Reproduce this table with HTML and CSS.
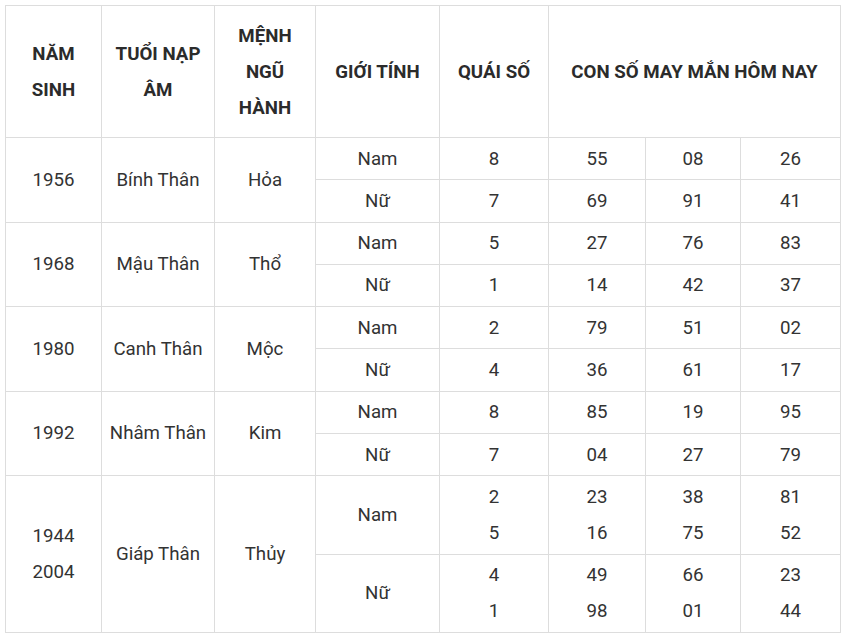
FILE: index.html
```html
<!DOCTYPE html>
<html lang="vi">
<head>
<meta charset="utf-8">
<link rel="stylesheet" href="styles.css">
</head>
<body>
<table class="tbl">
  <colgroup>
    <col class="c1"><col class="c2"><col class="c3"><col class="c4"><col class="c5"><col class="c6"><col class="c7"><col class="c8">
  </colgroup>
  <thead>
    <tr>
      <th>NĂM<br>SINH</th>
      <th>TUỔI NẠP<br>ÂM</th>
      <th>MỆNH<br>NGŨ<br>HÀNH</th>
      <th>GIỚI TÍNH</th>
      <th>QUÁI SỐ</th>
      <th colspan="3">CON SỐ MAY MẮN HÔM NAY</th>
    </tr>
  </thead>
  <tbody>
    <tr><td rowspan="2">1956</td><td rowspan="2">Bính Thân</td><td rowspan="2">Hỏa</td><td>Nam</td><td>8</td><td>55</td><td>08</td><td>26</td></tr>
    <tr><td>Nữ</td><td>7</td><td>69</td><td>91</td><td>41</td></tr>
    <tr><td rowspan="2">1968</td><td rowspan="2">Mậu Thân</td><td rowspan="2">Thổ</td><td>Nam</td><td>5</td><td>27</td><td>76</td><td>83</td></tr>
    <tr><td>Nữ</td><td>1</td><td>14</td><td>42</td><td>37</td></tr>
    <tr><td rowspan="2">1980</td><td rowspan="2">Canh Thân</td><td rowspan="2">Mộc</td><td>Nam</td><td>2</td><td>79</td><td>51</td><td>02</td></tr>
    <tr><td>Nữ</td><td>4</td><td>36</td><td>61</td><td>17</td></tr>
    <tr><td rowspan="2">1992</td><td rowspan="2">Nhâm Thân</td><td rowspan="2">Kim</td><td>Nam</td><td>8</td><td>85</td><td>19</td><td>95</td></tr>
    <tr><td>Nữ</td><td>7</td><td>04</td><td>27</td><td>79</td></tr>
    <tr><td rowspan="2">1944<br>2004</td><td rowspan="2">Giáp Thân</td><td rowspan="2">Thủy</td><td>Nam</td><td>2<br>5</td><td>23<br>16</td><td>38<br>75</td><td>81<br>52</td></tr>
    <tr><td>Nữ</td><td>4<br>1</td><td>49<br>98</td><td>66<br>01</td><td>23<br>44</td></tr>
  </tbody>
</table>
</body>
</html>
```
FILE: styles.css
```css
html, body {
  margin: 0;
  padding: 0;
  background: #fff;
}
body {
  font-family: Roboto, "Liberation Sans", Arial, sans-serif;
  color: #333;
}
.tbl {
  margin: 5px;
  border-collapse: collapse;
  table-layout: fixed;
  width: 835px;
  font-size: 18.7px;
}
.c1 { width: 96px; }
.c2 { width: 113px; }
.c3 { width: 101px; }
.c4 { width: 124px; }
.c5 { width: 109px; }
.c6 { width: 97px; }
.c7 { width: 95px; }
.c8 { width: 100px; }
.tbl th, .tbl td {
  border: 1px solid #ddd;
  text-align: center;
  vertical-align: middle;
}
.tbl th {
  font-weight: 700;
  color: #2b2b2b;
  line-height: 36px;
  padding: 11.5px 2px;
}
.tbl td {
  font-weight: 400;
  line-height: 36px;
  padding: 2.65px 2px;
}
```
